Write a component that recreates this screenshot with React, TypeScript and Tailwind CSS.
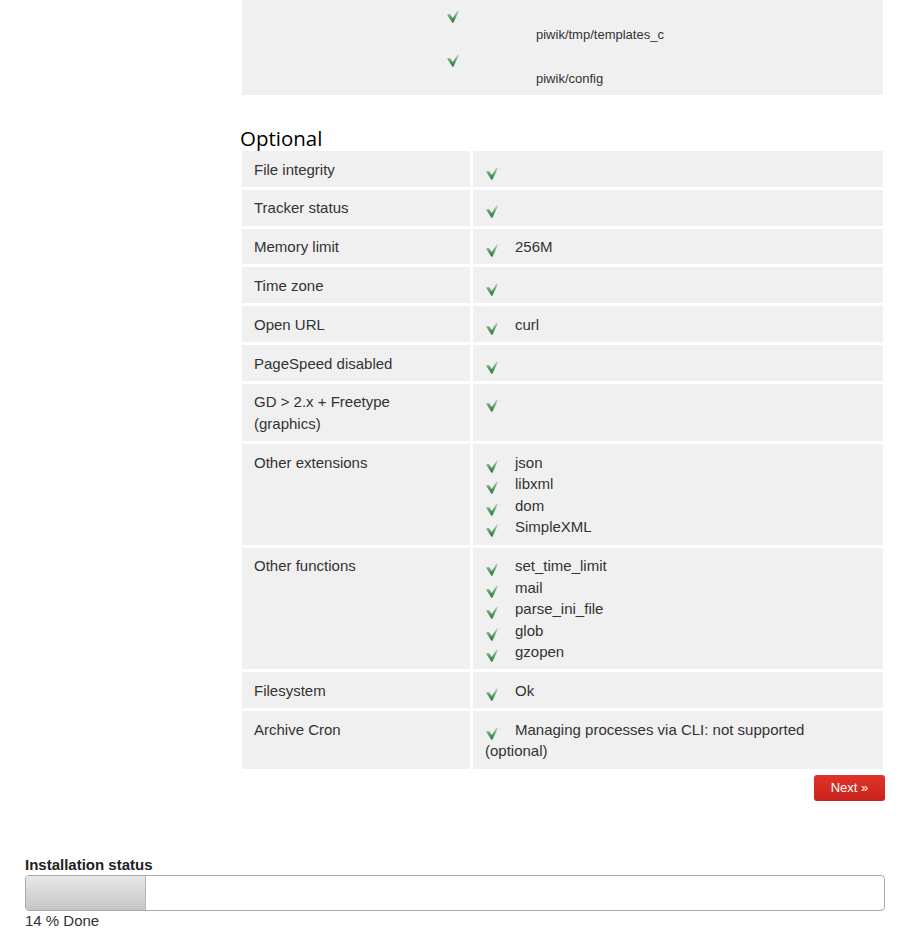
import React from "react";

const CheckIcon = ({ className = "" }: { className?: string }) => (
  <svg width="12" height="13" viewBox="0 0 12 13" className={className}>
    <defs>
      <linearGradient id="chk" x1="0" y1="0" x2="0" y2="1">
        <stop offset="0" stopColor="#d4dcd4" />
        <stop offset="0.45" stopColor="#6aa872" />
        <stop offset="1" stopColor="#1f7a30" />
      </linearGradient>
    </defs>
    <path d="M0 4.5 L3 4 L5.8 8 L10.6 0.3 L12 1 L6.4 12.8 L5.4 12.8 Z" fill="url(#chk)" />
  </svg>
);

type Row = { label: string; items: string[] };

const rows: Row[] = [
  { label: "File integrity", items: [""] },
  { label: "Tracker status", items: [""] },
  { label: "Memory limit", items: ["256M"] },
  { label: "Time zone", items: [""] },
  { label: "Open URL", items: ["curl"] },
  { label: "PageSpeed disabled", items: [""] },
  { label: "GD > 2.x + Freetype (graphics)", items: [""] },
  { label: "Other extensions", items: ["json", "libxml", "dom", "SimpleXML"] },
  {
    label: "Other functions",
    items: ["set_time_limit", "mail", "parse_ini_file", "glob", "gzopen"],
  },
  { label: "Filesystem", items: ["Ok"] },
  {
    label: "Archive Cron",
    items: ["Managing processes via CLI: not supported (optional)"],
  },
];

const paths = ["piwik/tmp/templates_c", "piwik/config"];

export default function App() {
  return (
    <div className="w-[899px] min-h-[941px] bg-white text-[#333] font-['Liberation_Sans',Arial,sans-serif]">
      <div className="ml-[240px] w-[645px]">
        {/* Writable directories (tail) */}
        <div className="mx-[2px] bg-[#f0f0f0] pt-[10px] pb-[6px] flex flex-col gap-[9px]">
          {paths.map((p) => (
            <div key={p}>
              <div className="pl-[205px] h-[13px]">
                <CheckIcon className="block" />
              </div>
              <div className="mt-[2px] pl-[294px] text-[13px] leading-[20px]">{p}</div>
            </div>
          ))}
        </div>

        <h2 className="mt-[30px] text-[20.5px] leading-[26px] text-black font-['Open_Sans',sans-serif]">
          Optional
        </h2>

        <div className="px-[2px] grid grid-cols-[228px_410px] gap-[3px] text-[15px] leading-[21.5px]">
          {rows.map((r) => (
            <React.Fragment key={r.label}>
              <div className="bg-[#f0f0f0] px-[12px] pt-[7.5px] pb-[6.83px]">{r.label}</div>
              <div className="bg-[#f0f0f0] px-[12px] pt-[7.5px] pb-[6.83px]">
                {r.items.map((it, i) => (
                  <div key={i}>
                    <CheckIcon className="inline-block align-[-5px] ml-[1px] mr-[17px]" />
                    {it}
                  </div>
                ))}
              </div>
            </React.Fragment>
          ))}
        </div>

        <div className="mt-[6px] flex justify-end">
          <button className="h-[26px] w-[71px] rounded-[3px] bg-gradient-to-b from-[#e0342a] to-[#c8231b] text-white text-[13px] leading-[26px]">
            Next »
          </button>
        </div>
      </div>

      <div className="ml-[25px] w-[860px] mt-[55px]">
        <div className="text-[15px] leading-[17px] font-bold text-[#222]">Installation status</div>
        <div className="mt-[2px] h-[36px] rounded-[4px] border border-[#aaaaaa] bg-white overflow-hidden flex">
          <div className="w-[120px] h-full bg-gradient-to-b from-[#e8e8e8] to-[#c6c6c6] border-r border-[#b5b5b5]" />
        </div>
        <div className="mt-[1px] text-[15px] leading-[17px] text-[#333]">14 % Done</div>
      </div>
    </div>
  );
}
